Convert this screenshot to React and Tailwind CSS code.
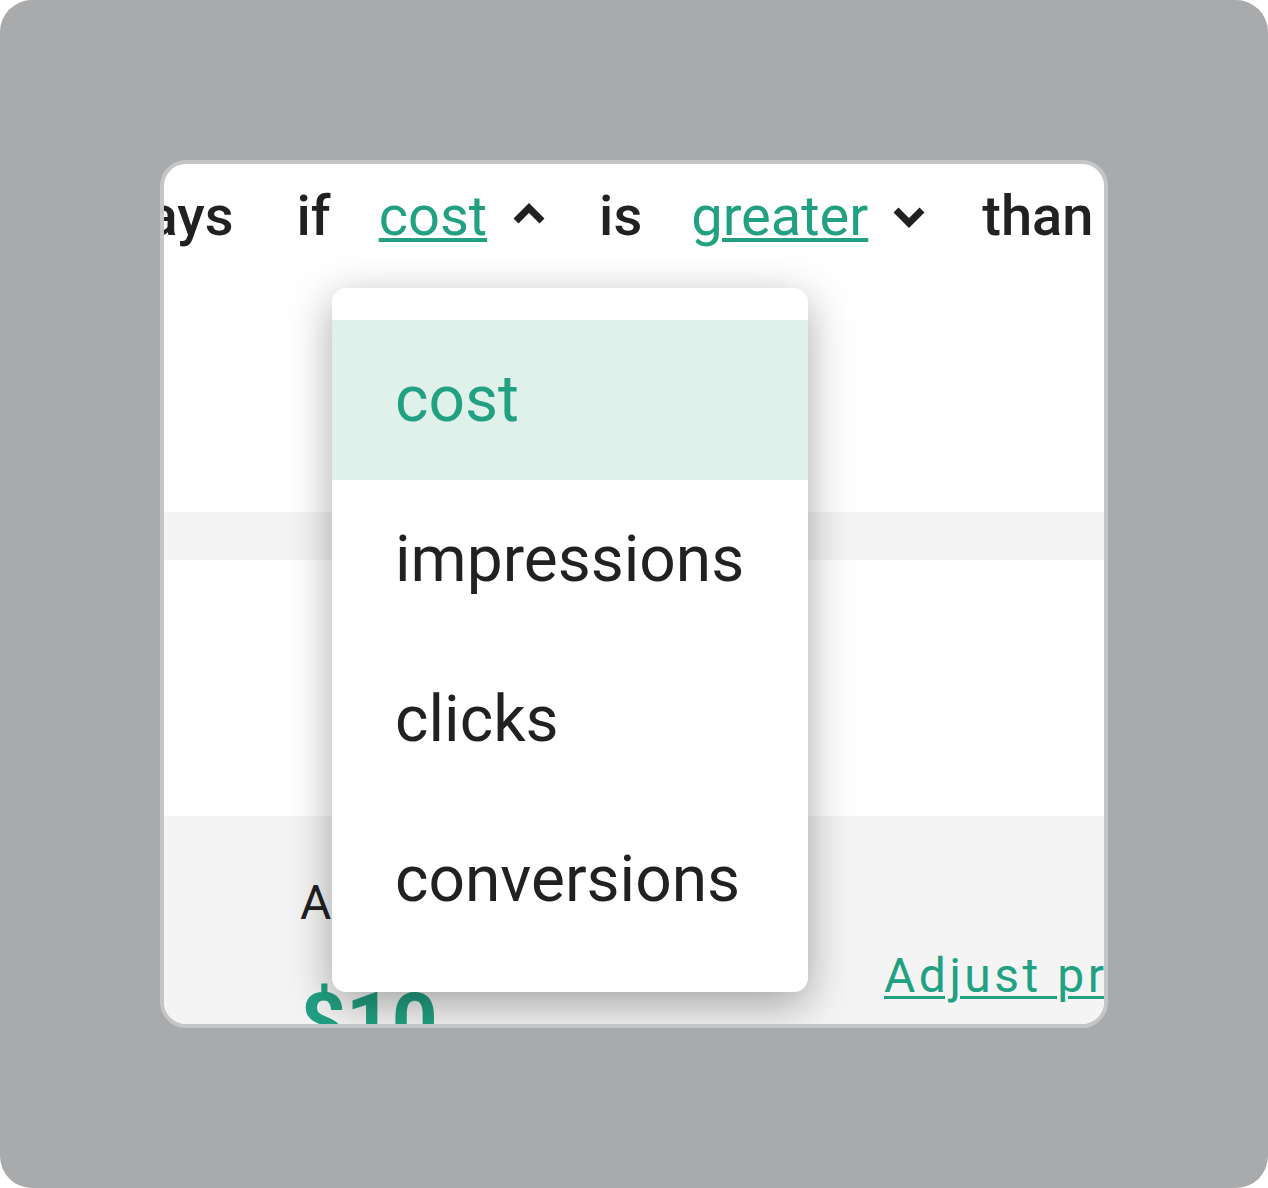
import React from "react";

function ChevronUp() {
  return (
    <svg width="32" height="22" viewBox="0 0 32 22" className="block shrink-0">
      <polyline points="3,19 16,6 29,19" fill="none" stroke="#212121" strokeWidth="7" strokeLinejoin="miter" />
    </svg>
  );
}

function ChevronDown() {
  return (
    <svg width="32" height="22" viewBox="0 0 32 22" className="block shrink-0">
      <polyline points="3,3 16,16 29,3" fill="none" stroke="#212121" strokeWidth="7" strokeLinejoin="miter" />
    </svg>
  );
}

const items = ["cost", "impressions", "clicks", "conversions"];

export default function App() {
  return (
    <div className="w-[1268px] h-[1188px] bg-white font-['Roboto',sans-serif]">
      <div className="w-full h-full rounded-[32px] bg-[#a9aaac] pt-[160px] pl-[160px]">
        <div className="relative w-[948px] h-[868px] rounded-[26px] border-4 border-[#c4c5c7] bg-white overflow-hidden">
          {/* top sentence row */}
          <div className="h-[348px] pt-[24px]">
            <div className="flex items-start whitespace-nowrap text-[56px] leading-[56px] text-[#212121] -ml-[48px]">
              <span className="font-medium">days</span>
              <span className="font-medium ml-[63px]">if</span>
              <span className="ml-[48px] text-[#21a182] underline decoration-4 underline-offset-3">cost</span>
              <span className="ml-[26px] mt-[14px]"><ChevronUp /></span>
              <span className="font-medium ml-[54px]">is</span>
              <span className="ml-[49px] text-[#21a182] underline decoration-4 underline-offset-3">greater</span>
              <span className="ml-[25px] mt-[19px]"><ChevronDown /></span>
              <span className="font-medium ml-[57px]">than</span>
            </div>
          </div>
          <div className="h-[48px] bg-[#f4f4f4]" />
          <div className="h-[256px] bg-white" />
          <div className="h-[208px] bg-[#f4f4f4] flex items-start whitespace-nowrap">
            <div className="w-[720px] shrink-0 pl-[136px] pt-[63px] flex flex-col">
              <span className="text-[48px] leading-[48px] tracking-[3.5px] text-[#212121]">Amount</span>
              <span className="mt-[55px] text-[80px] leading-[80px] font-bold text-[#21a182]">$10</span>
            </div>
            <a className="mt-[136px] text-[48px] leading-[48px] tracking-[3.5px] text-[#21a182] underline decoration-[3px] underline-offset-4">
              Adjust price
            </a>
          </div>

          {/* dropdown menu */}
          <div className="absolute left-[168px] top-[124px] w-[476px] rounded-[14px] bg-white py-[32px] shadow-[0_12px_44px_rgba(0,0,0,0.34)]">
            {items.map((it, i) => (
              <div
                key={it}
                className={
                  i === 0
                    ? "h-[160px] flex items-center pl-[63px] text-[64px] leading-none bg-[#e0f0ea] text-[#21a182]"
                    : "h-[160px] flex items-center pl-[63px] text-[64px] leading-none text-[#212121]"
                }
              >
                {it}
              </div>
            ))}
          </div>
        </div>
      </div>
    </div>
  );
}
